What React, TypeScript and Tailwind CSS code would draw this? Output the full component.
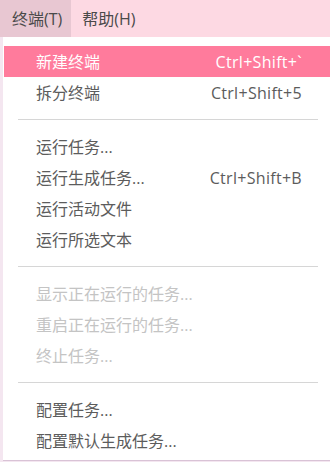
import React from "react";

type Item =
  | { kind: "item"; label: string; shortcut?: string; active?: boolean; disabled?: boolean }
  | { kind: "sep" };

const items: Item[] = [
  { kind: "item", label: "新建终端", shortcut: "Ctrl+Shift+`", active: true },
  { kind: "item", label: "拆分终端", shortcut: "Ctrl+Shift+5" },
  { kind: "sep" },
  { kind: "item", label: "运行任务..." },
  { kind: "item", label: "运行生成任务...", shortcut: "Ctrl+Shift+B" },
  { kind: "item", label: "运行活动文件" },
  { kind: "item", label: "运行所选文本" },
  { kind: "sep" },
  { kind: "item", label: "显示正在运行的任务...", disabled: true },
  { kind: "item", label: "重启正在运行的任务...", disabled: true },
  { kind: "item", label: "终止任务...", disabled: true },
  { kind: "sep" },
  { kind: "item", label: "配置任务..." },
  { kind: "item", label: "配置默认生成任务..." },
];

export default function App() {
  return (
    <div
      className="relative w-[330px] h-[462px] overflow-hidden bg-[#f4e6f0]"
      style={{ fontFamily: '"Segoe UI", "Open Sans", "Noto Sans CJK SC", sans-serif' }}
    >
      <div className="flex h-[37px] bg-[#fdd9e3] text-[16px] text-[#4a4a4a]">
        <div className="flex items-center pl-[12px] pr-[9px] bg-[#e8c7d2]">终端(T)</div>
        <div className="flex items-center pl-[11px]">帮助(H)</div>
      </div>
      <div className="absolute left-[3px] top-[37px] w-[340px] h-[424px] bg-white border-b border-[#d9c3d6] pt-[9px] pl-[1px]">
        {items.map((it, i) =>
          it.kind === "sep" ? (
            <div key={i} className="h-[23px] flex items-center pl-[14px] pr-[25px]">
              <div className="h-px w-[301px] bg-[#d6d6d6]" />
            </div>
          ) : (
            <div
              key={i}
              className={
                "h-[31px] flex items-center text-[16px] " +
                (it.active
                  ? "bg-[#ff7b9c] text-white"
                  : it.disabled
                  ? "text-[#c4c4c4]"
                  : "text-[#5c5c5c]")
              }
            >
              <div className="pl-[32px] w-[200px] whitespace-nowrap">{it.label}</div>
              <div className="w-[98px] text-right text-[16px] tracking-[0.3px] whitespace-nowrap">
                {it.shortcut ?? ""}
              </div>
            </div>
          )
        )}
      </div>
    </div>
  );
}
